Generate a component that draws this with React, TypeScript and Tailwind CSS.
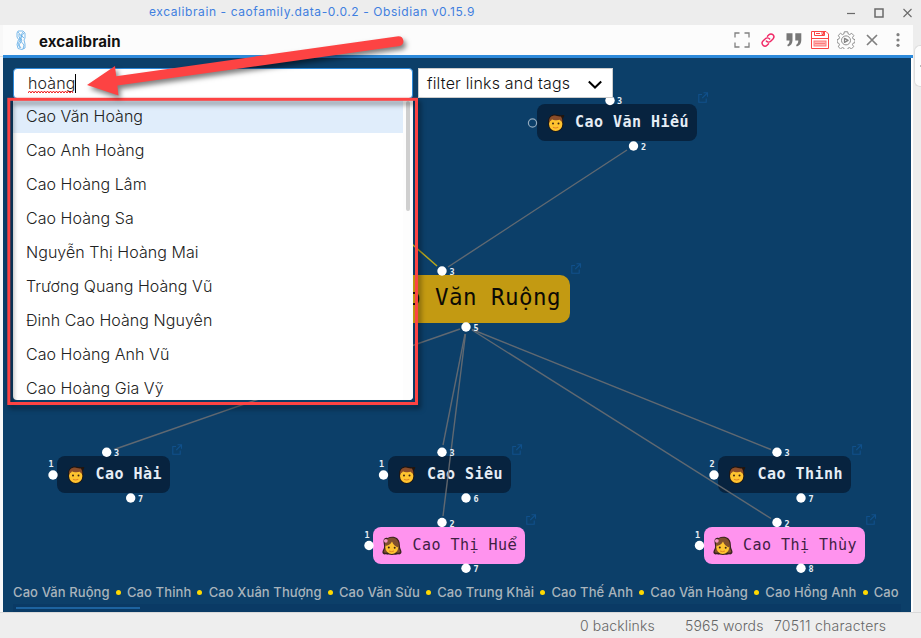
import React from "react";

type Gate = { x: number; y: number; n?: number; lx?: number; ly?: number; hollow?: boolean };

type PersonNode = {
  name: string;
  kind: "male" | "female" | "root";
  box: React.CSSProperties;
  link: [number, number];
};

const NODES: PersonNode[] = [
  { name: "Cao Văn Hiếu", kind: "male", box: { left: 537, top: 104, width: 160 }, link: [698, 92] },
  { name: "Cao Văn Ruộng", kind: "root", box: { left: 330, top: 275, width: 240 }, link: [571, 263] },
  { name: "Cao Hài", kind: "male", box: { left: 57, top: 456, width: 113 }, link: [172, 444] },
  { name: "Cao Siêu", kind: "male", box: { left: 388, top: 456, width: 123 }, link: [512, 444] },
  { name: "Cao Thinh", kind: "male", box: { left: 718, top: 456, width: 133 }, link: [852, 444] },
  { name: "Cao Thị Huể", kind: "female", box: { left: 373, top: 527, width: 152 }, link: [526, 514] },
  { name: "Cao Thị Thùy", kind: "female", box: { left: 704, top: 527, width: 161 }, link: [866, 514] },
];

const GATES: Gate[] = [
  { x: 610, y: 100.5, n: 3, lx: 617, ly: 104 },
  { x: 633.5, y: 146, n: 2, lx: 641, ly: 150 },
  { x: 532.5, y: 123, hollow: true },
  { x: 442, y: 271, n: 3, lx: 449.5, ly: 275 },
  { x: 466, y: 327, n: 5, lx: 473.5, ly: 331 },
  { x: 106.7, y: 452.3, n: 3, lx: 114, ly: 456 },
  { x: 53, y: 475, n: 1, lx: 48.5, ly: 467 },
  { x: 130.7, y: 498, n: 7, lx: 138, ly: 502 },
  { x: 442, y: 452.3, n: 3, lx: 449.5, ly: 456 },
  { x: 383.5, y: 475, n: 1, lx: 379, ly: 467 },
  { x: 466, y: 498, n: 6, lx: 473.5, ly: 502 },
  { x: 777, y: 452.3, n: 3, lx: 784.5, ly: 456 },
  { x: 714, y: 475, n: 2, lx: 709.5, ly: 467 },
  { x: 801, y: 498, n: 7, lx: 808.5, ly: 502 },
  { x: 442, y: 522.5, n: 2, lx: 449.5, ly: 526.5 },
  { x: 369, y: 545.5, n: 1, lx: 364.5, ly: 537.5 },
  { x: 466, y: 568.3, n: 7, lx: 473.5, ly: 572 },
  { x: 777, y: 522.5, n: 2, lx: 784.5, ly: 526.5 },
  { x: 699.5, y: 545.5, n: 1, lx: 695, ly: 537.5 },
  { x: 801, y: 568.3, n: 8, lx: 808.5, ly: 572 },
];

const LINES = [
  [627, 150, 448, 267],
  [460, 329, 114, 449.5],
  [465, 334, 443, 445],
  [465.5, 334, 443, 516],
  [472, 329.5, 771, 449.5],
  [472, 330, 771, 518.5],
];

const RESULTS = [
  "Cao Văn Hoàng",
  "Cao Anh Hoàng",
  "Cao Hoàng Lâm",
  "Cao Hoàng Sa",
  "Nguyễn Thị Hoàng Mai",
  "Trương Quang Hoàng Vũ",
  "Đinh Cao Hoàng Nguyên",
  "Cao Hoàng Anh Vũ",
  "Cao Hoàng Gia Vỹ",
];

const HISTORY = [
  "Cao Văn Ruộng",
  "Cao Thinh",
  "Cao Xuân Thượng",
  "Cao Văn Sửu",
  "Cao Trung Khải",
  "Cao Thế Anh",
  "Cao Văn Hoàng",
  "Cao Hồng Anh",
  "Cao",
];

function BoyFace() {
  return (
    <svg viewBox="0 0 18 18" className="h-[18px] w-[18px] shrink-0">
      <path d="M1.200 8C1 3 4 .5 8 .5c3 .6 6 .8 9.300.5-.2 2-.9 3-1.700 3.800.5 1.200.7 2.600.7 4.200 0 5-2.800 8.700-7.600 8.700S1.200 14 1.200 9z" fill="#21150f" />
      <ellipse cx="8.700" cy="10" rx="6.700" ry="7" fill="#ffc430" />
      <path d="M2 7.500C2 3.500 4.500 1.500 8 1.500c3 .8 4.500.9 6 1 .8 1.500 1.400 3 1.400 5.200-1-.2-2-.9-2.600-1.900C9.500 6.600 6 6 5 5.200 4.300 6.500 3.200 7.300 2 7.500z" fill="#8a4d2a" />
      <circle cx="6" cy="9.400" r="1" fill="#3f2614" />
      <circle cx="11.500" cy="9.400" r="1" fill="#3f2614" />
      <path d="M6 13.300q2.700 1.500 5.300-.2" stroke="#e08324" strokeWidth="1.100" fill="none" />
    </svg>
  );
}

function GirlFace() {
  return (
    <svg viewBox="0 0 20 20" className="h-5 w-5 shrink-0">
      <path d="M1.500 5C1.500 2 4 1.500 5.500 2 9 0 13 .5 15.500 2.500 18 5 17.800 8 18 11c.2 2 1.500 3 1.500 5 0 2-1.800 2.800-3.500 2.300-2 .8-10 .8-12 0C2 18.800.3 18 .4 16c.1-2 1.600-3 1.700-5C2.200 9 1.500 7 1.500 5z" fill="#38241d" />
      <path d="M3 7C3.500 3.500 6.500 1.800 10 1.800c4 0 6.800 2.700 6.800 7.200 0 3 .5 4.500 1.500 6.500-.5 1.500-2 1.500-3.500 1H5C3.500 17 2 17 1.700 15.500 3.300 13 3.200 10 3 7z" fill="#80502f" />
      <ellipse cx="9.800" cy="11.300" rx="6.400" ry="6.700" fill="#ffc430" />
      <path d="M3.400 10C3.300 5 6.500 2.500 10 2.500s7 3.500 6.200 9C14 10.500 11 9 10 5.500 8.500 8.500 6 9.500 3.400 10z" fill="#80502f" />
      <circle cx="3.800" cy="4.800" r="1.900" fill="#f398c4" />
      <circle cx="6.800" cy="11.500" r="1" fill="#3f2614" />
      <circle cx="12.700" cy="11.700" r="1" fill="#3f2614" />
      <path d="M7 15q2.500 1.300 5 0" stroke="#e08324" strokeWidth="1" fill="none" />
    </svg>
  );
}

/* The mono face sets the hook of "ể" outside its cell, so that letter uses the sans face. */
function MonoName({ name }: { name: string }) {
  return (
    <>
      {name.split(/(ể)/).map((part, i) =>
        part === "ể" ? (
          <span key={i} className="inline-block w-[9.500px] font-['DejaVu_Sans',sans-serif] tracking-normal">
            {part}
          </span>
        ) : (
          part
        ),
      )}
    </>
  );
}

function DiagramNode({ node }: { node: PersonNode }) {
  if (node.kind === "root") {
    return (
      <div style={node.box} className="absolute flex h-12 items-center justify-end rounded-[10px] bg-[#c39a12] pb-1 pr-[9px]">
        <span className="whitespace-pre font-['DejaVu_Sans_Mono',monospace] text-[22.500px] leading-none tracking-[0.450px] text-[#0c0a05]">
          {node.name}
        </span>
      </div>
    );
  }
  const female = node.kind === "female";
  return (
    <div
      style={node.box}
      className={`absolute flex h-[37px] items-center justify-between rounded-lg pr-2 ${
        female ? "bg-[#ff93ee] pl-[9px] text-[#3f2143]" : "bg-[#07233f] pl-[10px] font-bold text-[#e6edf5]"
      }`}
    >
      {female ? <GirlFace /> : <BoyFace />}
      <span className="whitespace-pre font-['DejaVu_Sans_Mono',monospace] text-[15px] leading-none tracking-[0.460px]">
        <MonoName name={node.name} />
      </span>
    </div>
  );
}

function Diagram() {
  return (
    <>
      {NODES.map((n) => (
        <DiagramNode key={n.name} node={n} />
      ))}
      <svg className="absolute left-0 top-0" width="911" height="612" viewBox="0 0 911 612">
        <g stroke="#6f7073" strokeWidth="1.400" opacity=".85">
          {LINES.map(([a, b, c, d], i) => (
            <line key={i} x1={a} y1={b} x2={c} y2={d} />
          ))}
        </g>
        <line x1="405" y1="238" x2="437" y2="266" stroke="#b6a51c" strokeWidth="1.500" />
        {GATES.map((g, i) => (
          <g key={i}>
            <circle
              cx={g.x}
              cy={g.y}
              r={g.hollow ? 4.1 : 4.7}
              fill={g.hollow ? "none" : "#fff"}
              stroke={g.hollow ? "#93aabd" : "none"}
              strokeWidth="1.200"
            />
            {g.n !== undefined && (
              <text x={g.lx} y={g.ly} fill="#e8eef4" fontFamily="DejaVu Sans Mono, monospace" fontWeight="700" fontSize="8.500">
                {g.n}
              </text>
            )}
          </g>
        ))}
        {NODES.map((n) => (
          <g
            key={n.name}
            transform={`translate(${n.link[0]} ${n.link[1]})`}
            fill="none"
            stroke="#10508b"
            strokeWidth="1.100"
          >
            <path d="M4 2.500H.8v7.700h7.400V6.500M5.500.8h4v4M9.300 1L4.200 6.200" />
          </g>
        ))}
      </svg>
    </>
  );
}

function HeaderIcons() {
  return (
    <div className="flex items-center gap-2 text-[#808080]">
      <svg width="18" height="18" viewBox="0 0 18 18" fill="none" stroke="currentColor" strokeWidth="1.300">
        <path d="M2 6.500V2h4.500M11.500 2H16v4.500M16 11.500V16h-4.500M6.500 16H2v-4.500" />
      </svg>
      <svg width="18" height="18" viewBox="0 0 24 24" fill="none" stroke="#f02865" strokeWidth="2.100" strokeLinecap="round">
        <g transform="translate(1.200 1.200) scale(.9)">
          <path d="M9.500 13.500a4.300 4.300 0 0 0 6.500.3l3.400-3.400a4.200 4.200 0 0 0-6-6l-2.200 2.200" />
          <path d="M14.500 10.500a4.300 4.300 0 0 0-6.500-.3l-3.400 3.400a4.200 4.200 0 0 0 6 6l2.200-2.200" />
        </g>
      </svg>
      <svg width="18" height="18" viewBox="0 0 18 18" fill="#777">
        <path d="M1.500 2.200h6v7c0 3-1.500 5.300-4.500 6.300l-.8-1.400c1.600-.8 2.300-2.300 2.300-4.600h-3zM10.300 2.200h6v7c0 3-1.500 5.300-4.500 6.300l-.8-1.400c1.600-.8 2.300-2.300 2.300-4.600h-3z" />
      </svg>
      <svg width="18" height="18" viewBox="0 0 18 18" fill="none" stroke="#fb4444" strokeWidth="1">
        <path d="M.5.5h14.500l2.500 2.500v14.500H.5z" fill="#fff" />
        <path d="M3.500.5v4h10v-4M5 2.500h4" />
        <path d="M11 1v2.500h1.500V1" />
        <path d="M.5 7.500h17" />
        <rect x="3" y="10" width="12" height="5" fill="#ffb5b5" stroke="#fd7b7b" />
        <path d="M4 12.500h10" stroke="#fd7b7b" />
      </svg>
      <svg width="18" height="18" viewBox="0 0 24 24" fill="none" stroke="#838383" strokeWidth="1.200" strokeLinejoin="round">
        <path d="M9.800 1h4.400l.8 3 1.800.8 2.800-1.700 2.800 2.900-1.700 2.800.8 1.900 2.500.8v4l-2.600.8-.8 1.900 1.600 2.600-2.900 3-2.700-1.700-1.900.8-.7 2.100h-4l-.8-2.100-1.900-.8-2.700 1.600L1.700 21l1.600-2.700-.8-1.900L.2 15.500v-4l2.400-.9.8-2-1.700-2.700 2.900-2.800L7.300 4.800l1.800-.8z" />
        <circle cx="12" cy="12.500" r="6" />
        <path d="M10 9.800v5.400l4.800-2.700z" strokeWidth="1.700" />
      </svg>
      <svg width="18" height="18" viewBox="0 0 18 18" fill="none" stroke="currentColor" strokeWidth="1.700">
        <path d="M4 4l10 10M14 4L4 14" />
      </svg>
      <svg width="18" height="18" viewBox="0 0 18 18" fill="currentColor">
        <circle cx="9" cy="3.700" r="1.600" />
        <circle cx="9" cy="9" r="1.600" />
        <circle cx="9" cy="14.300" r="1.600" />
      </svg>
    </div>
  );
}

function Titlebar() {
  return (
    <div className="flex h-[25px] shrink-0 items-center justify-between bg-[#ededed] pl-[149px] pr-[9px]">
      <span className="whitespace-nowrap pb-px text-[12px] leading-none tracking-[0.590px] text-[#3f7fe0]">
        excalibrain - caofamily.data-0.0.2 - Obsidian v0.15.9
      </span>
      <svg width="66" height="12" viewBox="0 0 66 12" fill="none" stroke="#6a6a6a">
        <path d="M1 6.500h8" strokeWidth="1.200" />
        <rect x="29" y="2" width="8" height="8" strokeWidth="1.500" />
        <path d="M57.500 2l8 8M65.500 2l-8 8" strokeWidth="1.100" />
      </svg>
    </div>
  );
}

function SearchPanel() {
  return (
    <div className="absolute left-[10px] top-[10px] w-[400px]">
      <div className="flex h-[31px] items-center rounded-[4px] border border-[#2d8adb] bg-white pb-px pl-[14px]">
        <span className="relative text-[16px] font-light leading-none tracking-[0.100px] text-[#222]">
          hoàng
          <svg className="absolute left-0 top-[15px]" width="48" height="4" viewBox="0 0 48 4" fill="none">
            <path
              d="M0 3l1.500-2 1.500 2 1.500-2 1.500 2 1.500-2 1.500 2 1.500-2 1.500 2 1.500-2 1.500 2 1.500-2 1.500 2 1.500-2 1.500 2 1.500-2 1.500 2 1.500-2 1.500 2 1.500-2 1.500 2 1.500-2 1.500 2 1.500-2 1.500 2 1.500-2 1.500 2 1.500-2 1.500 2 1.500-2 1.500 2"
              stroke="#f01818"
              strokeWidth="1"
            />
          </svg>
        </span>
        <span className="h-[19px] w-px bg-black" />
      </div>
      <div className="flex h-[301px] overflow-hidden rounded-b-[4px] bg-white">
        <div className="w-[390px]">
          {RESULTS.map((r, i) => (
            <div
              key={r}
              className={`flex h-[34px] items-center whitespace-nowrap pl-[13px] text-[16px] font-light tracking-[0.050px] text-[#222] ${
                i === 0 ? "bg-[#e0edfb]" : ""
              }`}
            >
              {r}
            </div>
          ))}
        </div>
        <div className="flex flex-1 justify-center bg-[#fdfdfd] pt-0.5">
          <div className="h-[110px] w-1 rounded-sm bg-[#cfcfcf]" />
        </div>
      </div>
    </div>
  );
}

function FilterSelect() {
  return (
    <div className="absolute left-[415px] top-[10px] flex h-[30px] w-[195px] items-center justify-between border border-[#ccc] bg-white pl-2 pr-[10px]">
      <span className="whitespace-nowrap text-[16px] font-light leading-none tracking-[0.180px] text-[#111]">filter links and tags</span>
      <svg className="mt-0.5" width="14" height="9" viewBox="0 0 14 9" fill="none" stroke="#000" strokeWidth="2">
        <path d="M.8 1.500L7 7.500l6.200-6" />
      </svg>
    </div>
  );
}

function History() {
  return (
    <div className="absolute bottom-0 left-[10px] w-[888px]">
      <div className="flex h-5 items-center whitespace-nowrap text-[13px] font-medium leading-none tracking-[0.100px] text-[#a9b4bc]">
        {HISTORY.map((h, i) => (
          <React.Fragment key={i}>
            {i > 0 && <span className="mx-[6.150px] h-[5px] w-[5px] shrink-0 rounded-full bg-[#ffd900]" />}
            <span className="shrink-0">{h}</span>
          </React.Fragment>
        ))}
      </div>
      <div className="mt-[2px] h-2 bg-[#0a3a65] pb-[3px] pl-[3px] pt-[3px]">
        <div className="h-0.5 w-[124px] bg-[#1d639f]" />
      </div>
    </div>
  );
}

function Annotations() {
  return (
    <svg className="pointer-events-none absolute left-0 top-0" width="921" height="638" viewBox="0 0 921 638">
      <defs>
        <filter id="soft" x="-10%" y="-30%" width="125%" height="180%" colorInterpolationFilters="sRGB">
          <feDropShadow dx="2.500" dy="3.500" stdDeviation="2.600" floodColor="#000" floodOpacity=".5" />
        </filter>
      </defs>
      <rect x="8.800" y="99.300" width="407.700" height="304.200" fill="none" stroke="#fd4343" strokeWidth="3" filter="url(#soft)" />
      <g filter="url(#soft)">
        <path d="M87 85L115 66L116.200 76.200L398.400 36.200A5 5 0 0 1 399.800 46L117.400 85.600L118.500 95.500Z" fill="#fd4343" />
      </g>
    </svg>
  );
}

export default function App() {
  return (
    <div className="relative flex h-[638px] w-[921px] flex-col overflow-hidden bg-[#ededed] font-['Inter',sans-serif]">
      <Titlebar />
      <div className="flex h-[587px] shrink-0">
        <div className="w-[3px] bg-[#f8f8f8]">
          <div className="h-8 border-b border-[#ddd]" />
        </div>
        <main className="flex w-[910px] flex-col bg-white">
          <header className="flex h-[33px] items-center justify-between border-b-[3px] border-[#2d8adb] bg-[#fcfcfc] pl-[11px] pr-[6px]">
            <div className="flex items-center gap-[11px]">
              <svg width="14" height="20" viewBox="0 0 14 20" fill="none" stroke="#5aa9e6" strokeWidth=".8">
                <path d="M4 1h5l2 2v5l-1 2 1 4v4l-3 1.500-4-1-1-4 1.500-5L3 7V3zM4 2l4 5-4 7 2 4M10 3L5 9l5 6-1 4M5 4v3l3 3-3 5 2 3M9 2L7 5l3 3" />
              </svg>
              <span className="pt-0.5 text-[15px] font-bold leading-none tracking-[0.120px] text-[#111]">excalibrain</span>
            </div>
            <HeaderIcons />
          </header>
          <div className="relative h-[554px] w-[908px] overflow-hidden bg-[#0c3f69]">
            <div className="absolute -left-[3px] -top-[58px] h-[612px] w-[911px]">
              <Diagram />
            </div>
            <FilterSelect />
            <SearchPanel />
            <History />
          </div>
        </main>
        <aside className="flex-1 pl-px pt-5">
          <div className="flex h-[42px] items-center justify-end rounded-l-md border border-r-0 border-[#ddd] bg-[#fcfcfc]">
            <span className="h-0.5 w-px bg-[#bbb]" />
          </div>
        </aside>
      </div>
      <footer className="flex flex-1 items-center border-t border-[#dadada] bg-[#eee] pl-[580px] pt-px text-[14px] font-light leading-none tracking-[0.120px] text-[#666]">
        <span className="w-[105px] shrink-0 whitespace-nowrap">0 backlinks</span>
        <span className="w-[89px] shrink-0 whitespace-nowrap">5965 words</span>
        <span className="whitespace-nowrap tracking-[0.250px]">70511 characters</span>
      </footer>
      <Annotations />
    </div>
  );
}
